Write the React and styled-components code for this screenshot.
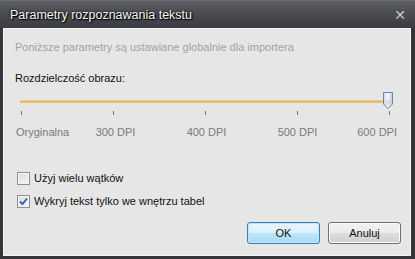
import React from 'react';
import styled, { createGlobalStyle } from 'styled-components';

const GlobalStyle = createGlobalStyle`
  html, body {
    margin: 0;
    padding: 0;
    background: #2f3136;
  }
  body {
    font-family: "Liberation Sans", "DejaVu Sans", sans-serif;
  }
`;

const Window = styled.div`
  width: 415px;
  height: 259px;
  display: flex;
  flex-direction: column;
  background: #34363b;
  box-sizing: border-box;
`;

const TitleBar = styled.div`
  height: 28px;
  flex-shrink: 0;
  display: flex;
  align-items: center;
  justify-content: space-between;
  padding: 0 9px 0 10px;
  background: linear-gradient(#5d5f65 0%, #4a4c52 45%, #3a3c41 100%);
  border-top: 1px solid #6c6e74;
  box-sizing: border-box;
`;

const Title = styled.span`
  color: #f4f4f4;
  font-size: 12.5px;
  text-shadow: 0 0 3px #000, 1px 1px 1px #000;
`;

const Close = styled.span`
  color: #c9cacd;
  font-family: "DejaVu Sans", sans-serif;
  font-weight: bold;
  font-size: 14px;
  line-height: 1;
`;

const Content = styled.div`
  flex: 1;
  margin: 0 4px 3px 3px;
  background: #e6e6e6;
  border: 1px solid #f6f6f6;
  display: flex;
  flex-direction: column;
  padding: 11px 0 0 11px;
  box-sizing: border-box;
  font-size: 11px;
`;

const Hint = styled.div`
  color: #a2a2a2;
  height: 14px;
  line-height: 14px;
`;

const Label = styled.div`
  color: #111;
  margin-top: 17px;
  height: 14px;
  line-height: 14px;
`;

const SliderArea = styled.div`
  position: relative;
  margin: 6px 0 0 5px;
  width: 370px;
  height: 24px;
`;

const Track = styled.div`
  position: absolute;
  left: 0;
  right: 0;
  top: 9px;
  height: 3px;
  background: linear-gradient(#f0d79c, #e2b257 60%, #edcf8d);
`;

const Thumb = styled.svg`
  position: absolute;
  right: -4px;
  top: 1px;
`;

const Ticks = styled.div`
  position: absolute;
  left: 0;
  right: 0;
  top: 20px;
  display: flex;
  justify-content: space-between;
  padding: 0 0 0 1px;
`;

const Tick = styled.span`
  width: 1px;
  height: 4px;
  background: #777;
`;

const TickLabels = styled.div`
  display: grid;
  grid-template-columns: 1fr 91px 91px 91px 1fr;
  width: 381px;
  margin-left: 1px;
  margin-top: 10px;
  color: #7a7a7a;
  height: 14px;
  line-height: 14px;
`;

const TickLabel = styled.span`
  justify-self: ${p => p.$align || 'center'};
  white-space: nowrap;
`;

const CheckRow = styled.label`
  display: flex;
  align-items: center;
  gap: 4px;
  margin-top: ${p => p.$top}px;
  margin-left: 2px;
  color: #111;
  height: 14px;
`;

const Box = styled.span`
  width: 11px;
  height: 11px;
  border: 1px solid #8e8f8f;
  background: linear-gradient(135deg, #dcdcdc, #f6f6f6);
  box-shadow: inset 0 0 0 1px #f4f4f4;
  display: flex;
  align-items: center;
  justify-content: center;
`;

const Buttons = styled.div`
  display: flex;
  justify-content: flex-end;
  gap: 8px;
  margin-top: auto;
  margin-bottom: 11px;
  margin-right: 9px;
`;

const Button = styled.button`
  width: 73px;
  height: 22px;
  font-family: inherit;
  font-size: 11px;
  color: #111;
  border-radius: 3px;
  border: 1px solid ${p => (p.$primary ? '#3c7fb1' : '#707070')};
  background: ${p =>
    p.$primary
      ? 'linear-gradient(#eaf6fd 0%, #d9f0fc 50%, #bee6fd 51%, #a7d9f5 100%)'
      : 'linear-gradient(#f2f2f2 0%, #ebebeb 50%, #dddddd 51%, #cfcfcf 100%)'};
  box-shadow: inset 0 0 0 1px ${p => (p.$primary ? '#c4e5f6' : '#fcfcfc')};
  padding: 0;
`;

const Check = () => (
  <svg width="9" height="9" viewBox="0 0 9 9">
    <path d="M1 4.5 L3.5 7 L8 1.5" fill="none" stroke="#2b64b8" strokeWidth="1.9" />
  </svg>
);

const ticks = [0, 1, 2, 3, 4];

export default function App() {
  return (
    <>
      <GlobalStyle />
      <Window>
        <TitleBar>
          <Title>Parametry rozpoznawania tekstu</Title>
          <Close>✕</Close>
        </TitleBar>
        <Content>
          <Hint>Poniższe parametry są ustawiane globalnie dla importera</Hint>
          <Label>Rozdzielczość obrazu:</Label>
          <SliderArea>
            <Track />
            <Ticks>
              {ticks.map(t => (
                <Tick key={t} />
              ))}
            </Ticks>
            <Thumb width="12" height="18" viewBox="0 0 12 18">
              <defs>
                <linearGradient id="thumbFill" x1="0" y1="0" x2="1" y2="0">
                  <stop offset="0" stopColor="#c9d9ea" />
                  <stop offset="0.5" stopColor="#f6f9fc" />
                  <stop offset="1" stopColor="#b8cbe0" />
                </linearGradient>
              </defs>
              <path
                d="M1.5 0.5 H10.5 V12 L6 16.5 L1.5 12 Z"
                fill="url(#thumbFill)"
                stroke="#6b84a2"
              />
              <path d="M3.5 8 H8.5 V11.5 L6 14 L3.5 11.5 Z" fill="#e7c9c4" opacity="0.6" />
            </Thumb>
          </SliderArea>
          <TickLabels>
            <TickLabel $align="start">Oryginalna</TickLabel>
            <TickLabel>300 DPI</TickLabel>
            <TickLabel>400 DPI</TickLabel>
            <TickLabel>500 DPI</TickLabel>
            <TickLabel $align="end">600 DPI</TickLabel>
          </TickLabels>
          <CheckRow $top={32}>
            <Box />
            Użyj wielu wątków
          </CheckRow>
          <CheckRow $top={9}>
            <Box>
              <Check />
            </Box>
            Wykryj tekst tylko we wnętrzu tabel
          </CheckRow>
          <Buttons>
            <Button $primary>OK</Button>
            <Button>Anuluj</Button>
          </Buttons>
        </Content>
      </Window>
    </>
  );
}
